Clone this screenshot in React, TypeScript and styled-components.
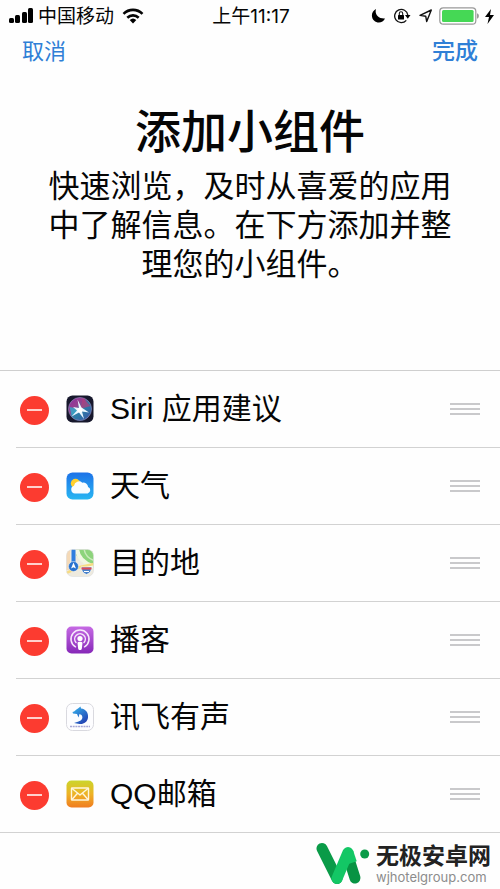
import React from "react";
import styled, { createGlobalStyle } from "styled-components";

const GlobalStyle = createGlobalStyle`
  * { box-sizing: border-box; }
  body {
    margin: 0;
    background: #fefefe;
    color: #060606;
    font-family: "Liberation Sans", "Noto Sans CJK SC", sans-serif;
  }
  h1, p, ul { margin: 0; padding: 0; }
`;

const Screen = styled.div`
  display: flex;
  flex-direction: column;
  min-height: 100vh;
  overflow: hidden;
`;

const StatusBar = styled.header`
  display: grid;
  grid-template-columns: 1fr auto 1fr;
  align-items: center;
  height: 32px;
  padding: 0 6px 0 8px;
  font-size: 19px;
  line-height: 32px;
`;

const StatusGroup = styled.div<{ $end?: boolean }>`
  display: flex;
  align-items: center;
  justify-content: ${(p) => (p.$end ? "flex-end" : "flex-start")};
  gap: ${(p) => (p.$end ? "6px" : "4px")};
  svg { display: block; flex: none; }
`;

const Carrier = styled.span`
  margin-right: 4px;
  padding-top: 2px;
  line-height: 30px;
`;

const Clock = styled.time`
  padding-top: 2px;
  font-family: Inter, "Noto Sans CJK SC", sans-serif;
  font-size: 19px;
  line-height: 30px;
`;

const NavBar = styled.nav`
  display: flex;
  justify-content: space-between;
  height: 38px;
  padding: 0 22px;
`;

const NavButton = styled.button<{ $strong?: boolean }>`
  height: 34px;
  padding: 0;
  border: 0;
  background: none;
  color: #2f7fd6;
  font-family: "Noto Sans CJK SC", sans-serif;
  font-size: ${(p) => (p.$strong ? 23 : 22)}px;
  font-weight: ${(p) => (p.$strong ? 500 : 400)};
  line-height: 34px;
  cursor: pointer;
`;

const Intro = styled.section`
  min-height: 300px;
  padding: 30px 48px 0;
  text-align: center;
`;

const Title = styled.h1`
  font-size: 46px;
  font-weight: 500;
  line-height: 64px;
`;

const Description = styled.p`
  margin: 3px -8px 0;
  font-size: 31px;
  line-height: 39px;
`;

const WidgetList = styled.ul`
  list-style: none;
  border-top: 1px solid #cfcfcf;
`;

const WidgetRow = styled.li`
  display: flex;
  align-items: center;
  height: 77px;
  margin-left: 16px;
  padding: 0 20px 0 4px;
  border-bottom: 1px solid #d2d2d2;
  &:last-child {
    margin-left: 0;
    padding-left: 20px;
  }
`;

const RemoveButton = styled.button`
  display: flex;
  align-items: center;
  justify-content: center;
  width: 29px;
  height: 29px;
  padding: 0;
  border: 0;
  border-radius: 50%;
  background: #fc3b30;
  cursor: pointer;
  margin-top: 2px;
`;

const Minus = styled.span`
  width: 15px;
  height: 2px;
  background: #ffd0cc;
`;

const AppIcon = styled.svg`
  flex: none;
  width: 28px;
  height: 28px;
  margin: 0 16px 0 17px;
`;

const WidgetName = styled.span`
  flex: 1;
  font-size: 30px;
  line-height: 44px;
`;

const DragHandle = styled.button`
  display: flex;
  flex-direction: column;
  justify-content: space-between;
  width: 30px;
  height: 12px;
  padding: 0;
  border: 0;
  background: none;
  cursor: grab;
  span { height: 2px; background: #c9c9cb; }
`;

const Footer = styled.footer`
  display: flex;
  justify-content: flex-end;
  align-items: center;
  gap: 6px;
  padding: 9px 9px 0 0;
`;

const SiteText = styled.div`
  display: flex;
  flex-direction: column;
`;

const SiteName = styled.strong`
  color: #222;
  font-size: 23px;
  font-weight: 700;
  line-height: 26px;
`;

const SiteUrl = styled.span`
  color: #8c8c8c;
  font-family: Inter, sans-serif;
  font-size: 13px;
  line-height: 16px;
`;

const SiriArt = () => (
  <>
    <defs>
      <linearGradient id="siri-disc" x1="0" y1="0" x2="1" y2="1">
        <stop offset="0" stopColor="#8d2f9f" />
        <stop offset=".35" stopColor="#96408f" />
        <stop offset=".55" stopColor="#2b7fa8" />
        <stop offset="1" stopColor="#3b50a4" />
      </linearGradient>
    </defs>
    <rect x=".5" y=".5" width="27" height="27" rx="6" fill="#17182c" />
    <circle cx="14" cy="14" r="11.5" fill="url(#siri-disc)" stroke="#8b83b4" strokeWidth=".7" />
    <path d="M14 14 17 3 24.500 11Z" fill="#c33778" opacity=".65" />
    <path d="M14 14 3.500 12 6 22Z" fill="#26b9d2" opacity=".7" />
    <path d="M11.500 4.500 15.500 12.500 23 17.500 16 16.500 18 24 13 17.500 5.500 21.500 11 15.500 7 12 13 13Z" fill="#e9f5ff" />
    <circle cx="14" cy="15" r="2.500" fill="#fff" />
  </>
);

const WeatherArt = () => (
  <>
    <defs>
      <linearGradient id="sky" x1="0" y1="0" x2="0" y2="1">
        <stop stopColor="#1d72e8" />
        <stop offset="1" stopColor="#28b6f2" />
      </linearGradient>
    </defs>
    <rect x=".5" y=".5" width="27" height="27" rx="6" fill="url(#sky)" />
    <circle cx="9.500" cy="11.500" r="4.700" fill="#ffd02e" />
    <path d="M9 21.500a4 4 0 0 1-1-7.800 5 5 0 0 1 8.300-3 4.800 4.800 0 0 1 5.800 4.200 3.500 3.500 0 0 1-.4 6.600Z" fill="#f8fcff" />
  </>
);

const MapsArt = () => (
  <>
    <defs>
      <clipPath id="map-clip"><rect x=".5" y=".5" width="27" height="27" rx="6" /></clipPath>
    </defs>
    <g clipPath="url(#map-clip)">
      <rect width="28" height="28" fill="#eeeade" />
      <path d="M10 0h18v19L17 14 10 6Z" fill="#8dd47c" />
      <path d="M11 0c1 9 8 15 18 18" fill="none" stroke="#f1f7e3" strokeWidth="4" />
      <path d="M18 0c1 6 5 10 11 12" fill="none" stroke="#c9eabb" strokeWidth="1.500" />
      <path d="M0 0h4v21H0Z" fill="#f4d9b7" />
      <path d="M0 24 14 18 28 15" fill="none" stroke="#f7dc82" strokeWidth="2.500" />
      <path d="M7.500 0v17" stroke="#2f7fdf" strokeWidth="4" />
      <circle cx="7.500" cy="17.500" r="5" fill="#2872cf" stroke="#fff" strokeWidth=".5" />
      <path d="m7.500 13.500 2.500 6-2.500-1.300L5 19.500Z" fill="#fff" />
      <path d="M15 18h11c-1.500 3 .2 5-5.500 7.500C14.800 23 16.500 21 15 18Z" fill="#4b83ca" stroke="#fff" strokeWidth=".7" />
      <path d="M15.500 18.500h10v2h-10Z" fill="#df4b57" />
      <path d="M18 22.500h5" stroke="#fff" />
    </g>
    <rect x=".5" y=".5" width="27" height="27" rx="6" fill="none" stroke="#ddd" strokeWidth=".6" />
  </>
);

const PodcastArt = () => (
  <>
    <defs>
      <linearGradient id="podcast" x1="0" y1="0" x2="0" y2="1">
        <stop stopColor="#c66ae4" />
        <stop offset="1" stopColor="#8628b8" />
      </linearGradient>
    </defs>
    <rect x=".5" y=".5" width="27" height="27" rx="5" fill="url(#podcast)" />
    <g fill="none" stroke="#f6e9fb" strokeWidth="1.500" strokeLinecap="round">
      <path d="M9.500 20.800a9 9 0 1 1 9 0" />
      <path d="M10 16.500a5.300 5.300 0 1 1 8 0" />
    </g>
    <circle cx="14" cy="12.500" r="2.600" fill="#fff" />
    <path d="M11.500 17c0-1.700 5-1.700 5 0l-.7 5.700c-.2 1.800-3.400 1.800-3.600 0Z" fill="#fff" />
  </>
);

const DolphinArt = () => (
  <>
    <defs>
      <linearGradient id="dolphin" x1="0" y1="0" x2=".7" y2="1">
        <stop stopColor="#36b7ef" />
        <stop offset="1" stopColor="#2342b3" />
      </linearGradient>
    </defs>
    <rect x=".5" y=".5" width="27" height="27" rx="6" fill="#fdfdff" stroke="#d9d9df" />
    <path d="M6.500 9C9 8.500 9.500 6.500 12 5.500L14.500 3.500 15 5.500C20 6 22.500 10 22 14.500 21.500 19 17.500 21.500 13.500 21L8 20 12.500 18.500C16 17.500 17.500 14.500 15.500 12L13.500 11 12.500 14.500 11 11 7 10.500Z" fill="url(#dolphin)" />
    <path d="M4 23.500h20" stroke="#a8a8d5" strokeWidth="1.500" strokeDasharray="2 .7" />
  </>
);

const MailArt = () => (
  <>
    <defs>
      <linearGradient id="mail" x1="0" y1="0" x2="0" y2="1">
        <stop stopColor="#cbd52b" />
        <stop offset=".5" stopColor="#eeb326" />
        <stop offset="1" stopColor="#f07c20" />
      </linearGradient>
    </defs>
    <rect x=".5" y=".5" width="27" height="27" rx="5" fill="url(#mail)" />
    <g fill="none" stroke="#fff6dc" strokeWidth="1.400" strokeLinejoin="round">
      <rect x="5.500" y="8" width="17" height="12" rx=".5" />
      <path d="m6 8.500 8 6.500 8-6.500M6 19.500l5.500-6.300M22 19.500l-5.500-6.300" />
    </g>
  </>
);

const widgets = [
  { name: "Siri 应用建议", art: <SiriArt /> },
  { name: "天气", art: <WeatherArt /> },
  { name: "目的地", art: <MapsArt /> },
  { name: "播客", art: <PodcastArt /> },
  { name: "讯飞有声", art: <DolphinArt /> },
  { name: "QQ邮箱", art: <MailArt /> },
];

const SignalIcon = () => (
  <svg width="26" height="16" viewBox="0 0 26 16" aria-hidden="true">
    <rect x="1" y="10" width="5" height="5" rx="1.500" />
    <rect x="7" y="7" width="5" height="8" rx="1.500" />
    <rect x="14" y="4" width="5" height="11" rx="1.500" />
    <rect x="20" y="0" width="5" height="15" rx="1.500" />
  </svg>
);

const WifiIcon = () => (
  <svg width="22" height="16" viewBox="0 0 22 16" aria-hidden="true">
    <g fill="none" stroke="#050505" strokeWidth="2.600">
      <path d="M1.500 5.800a13.500 13.500 0 0 1 19 0" />
      <path d="M5.300 9.700a8.200 8.200 0 0 1 11.400 0" />
    </g>
    <path d="m11 15.500-3.300-3.400a4.800 4.800 0 0 1 6.600 0Z" />
  </svg>
);

const MoonIcon = () => (
  <svg width="15" height="16" viewBox="0 0 15 16" aria-hidden="true">
    <path d="M5 1C3.500 6 7 11 14 10.500 12 15 6.500 16 3 12.500-.5 9 .5 3 5 1Z" />
  </svg>
);

const RotationLockIcon = () => (
  <svg width="20" height="16" viewBox="-1 0 20 16" aria-hidden="true">
    <path d="M13.300 12.300a6.600 6.600 0 1 1 1.500-5.300" fill="none" stroke="#111" strokeWidth="1.300" />
    <path d="m12 7h5.500l-2.700 3.700Z" />
    <rect x="5" y="7" width="6" height="4.500" rx=".5" />
    <path d="M6.300 7V5.500a1.700 1.700 0 0 1 3.400 0V7" fill="none" stroke="#111" strokeWidth="1.100" />
  </svg>
);

const LocationIcon = () => (
  <svg width="15" height="16" viewBox="0 0 15 16" aria-hidden="true">
    <path d="M13.300 2 8.700 13.500 7.700 8.200 2 7.400Z" fill="none" stroke="#111" strokeWidth="1.400" strokeLinejoin="round" />
  </svg>
);

const BatteryIcon = () => (
  <svg width="40" height="18" viewBox="0 0 40 18" aria-hidden="true">
    <rect x=".8" y=".8" width="36" height="16.400" rx="3.500" fill="#fff" stroke="#999" strokeWidth="1.200" />
    <rect x="3" y="3" width="31.600" height="12" rx="1.500" fill="#45d855" />
    <path d="M38 6.300c2.500.8 2.500 4.600 0 5.400Z" fill="#999" />
  </svg>
);

const BoltIcon = () => (
  <svg width="9" height="15" viewBox="0 0 9 15" aria-hidden="true">
    <path d="M6 0 0 8h4L2.500 15 9 6H5Z" />
  </svg>
);

const SiteLogo = () => (
  <svg width="54" height="43" viewBox="0 0 54 43" aria-hidden="true">
    <g fill="none" strokeWidth="11" strokeLinecap="round">
      <path d="M32 14 39 36" stroke="#079343" />
      <path d="M6 6.500 21 36.500" stroke="#0a9b48" />
      <path d="M21 36.500 32 10.500" stroke="#13c765" />
      <path d="M32 10.500 35.500 21" stroke="#13c765" strokeLinecap="butt" />
    </g>
    <circle cx="48.700" cy="12" r="4.500" fill="#0a9b48" />
  </svg>
);

export default function App() {
  return (
    <Screen>
      <GlobalStyle />
      <StatusBar>
        <StatusGroup>
          <SignalIcon />
          <Carrier>中国移动</Carrier>
          <WifiIcon />
        </StatusGroup>
        <Clock>上午11:17</Clock>
        <StatusGroup $end>
          <MoonIcon />
          <RotationLockIcon />
          <LocationIcon />
          <BatteryIcon />
          <BoltIcon />
        </StatusGroup>
      </StatusBar>
      <NavBar>
        <NavButton type="button">取消</NavButton>
        <NavButton type="button" $strong>完成</NavButton>
      </NavBar>
      <main>
        <Intro>
          <Title>添加小组件</Title>
          <Description>
            快速浏览，及时从喜爱的应用
            <br />
            中了解信息。在下方添加并整
            <br />
            理您的小组件。
          </Description>
        </Intro>
        <WidgetList>
          {widgets.map((w) => (
            <WidgetRow key={w.name}>
              <RemoveButton type="button" aria-label={`移除 ${w.name}`}>
                <Minus />
              </RemoveButton>
              <AppIcon viewBox="0 0 28 28" aria-hidden="true">{w.art}</AppIcon>
              <WidgetName>{w.name}</WidgetName>
              <DragHandle type="button" aria-label={`排序 ${w.name}`}>
                <span />
                <span />
                <span />
              </DragHandle>
            </WidgetRow>
          ))}
        </WidgetList>
      </main>
      <Footer>
        <SiteLogo />
        <SiteText>
          <SiteName>无极安卓网</SiteName>
          <SiteUrl>wjhotelgroup.com</SiteUrl>
        </SiteText>
      </Footer>
    </Screen>
  );
}
